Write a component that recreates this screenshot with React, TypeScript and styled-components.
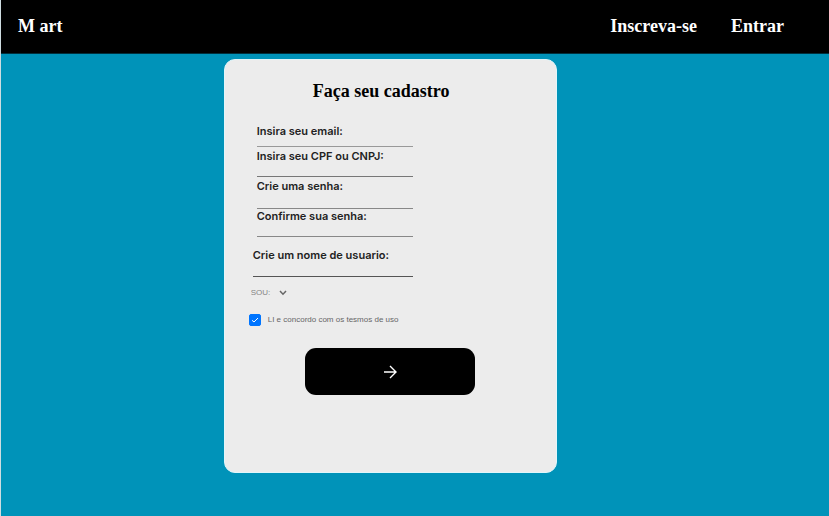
import React, { useId, useState } from "react";
import styled, { createGlobalStyle } from "styled-components";

const GlobalStyle = createGlobalStyle`
  *, *::before, *::after { box-sizing: border-box; }
  body {
    margin: 0;
    background: #0093b9;
    font-family: Inter, sans-serif;
  }
`;

const Page = styled.div`
  display: flex;
  flex-direction: column;
  min-height: 100vh;
  border-left: 1px solid #cfdde1;
`;

const TopBar = styled.header`
  display: flex;
  align-items: center;
  justify-content: space-between;
  padding: 15px 45px 15px 17px;
  background: #000;
  border-bottom: 1px solid #00303d;
`;

const TopLink = styled.a`
  color: #fff;
  font: bold 18px/23px "Liberation Serif", serif;
  text-decoration: none;
`;

const Nav = styled.nav`
  display: flex;
  gap: 34px;
`;

const Main = styled.main`
  padding: 5px 0 43px 26.9%;
`;

const Card = styled.form`
  display: flex;
  flex-direction: column;
  width: 55%;
  min-height: 414px;
  padding: 19px 24px;
  background: #ececec;
  border: 1px solid #e2f6fa;
  border-radius: 11px;
`;

const Title = styled.h1`
  margin: 0 0 21px;
  padding-right: 18px;
  color: #000;
  font: bold 18px/24px "Liberation Serif", serif;
  text-align: center;
`;

const Fields = styled.div<{ $inset: number }>`
  display: flex;
  flex-direction: column;
  width: 164px;
  padding-left: ${(p) => p.$inset}px;
`;

const FieldBox = styled.div<{ $gap: number }>`
  display: flex;
  flex-direction: column;
  margin-top: ${(p) => p.$gap}px;
`;

const Label = styled.label`
  color: #222;
  font-size: 11px;
  font-weight: 600;
  line-height: 14px;
  white-space: nowrap;
`;

const TextInput = styled.input<{ $height: number; $line: string }>`
  width: 100%;
  height: ${(p) => p.$height}px;
  padding: 0;
  border: 0;
  border-bottom: 1px solid ${(p) => p.$line};
  border-radius: 0;
  background: transparent;
  font-size: 10px;
  outline: none;
`;

const OptionRow = styled.div`
  display: flex;
  align-items: center;
  height: 16px;
  margin-top: 8px;
  padding-left: 2px;
`;

const SelectWrap = styled.span`
  display: grid;
  align-items: center;
  justify-items: end;
  width: 36px;

  & > * { grid-area: 1 / 1; }
  svg { pointer-events: none; }
`;

const Select = styled.select`
  width: 100%;
  height: 16px;
  padding: 0;
  border: 0;
  appearance: none;
  background: transparent;
  color: #858585;
  font: 8px/16px "Liberation Sans", sans-serif;
`;

const TermsRow = styled.label`
  display: flex;
  align-items: center;
  gap: 7px;
  margin-top: 13px;
  color: #666;
  font: 8px/12px "Liberation Sans", sans-serif;
`;

const CheckWrap = styled.span`
  display: grid;
  place-items: center;

  & > * { grid-area: 1 / 1; }
  svg { pointer-events: none; }
`;

const Checkbox = styled.input`
  appearance: none;
  width: 12px;
  height: 12px;
  margin: 0;
  border: 1px solid #0075ff;
  border-radius: 2px;
  background: #fff;

  &:checked { background: #0075ff; }
`;

const Submit = styled.button`
  display: flex;
  align-items: center;
  justify-content: center;
  width: 60%;
  height: 47px;
  margin: 22px auto 0;
  padding: 0;
  border: 0;
  border-radius: 11px;
  background: #000;
`;

type FieldProps = {
  label: string;
  type?: string;
  gap?: number;
  height: number;
  line: string;
};

function Field({ label, type = "text", gap = 0, height, line }: FieldProps) {
  const id = useId();
  return (
    <FieldBox $gap={gap}>
      <Label htmlFor={id}>{label}</Label>
      <TextInput id={id} type={type} $height={height} $line={line} />
    </FieldBox>
  );
}

export default function App() {
  const [accepted, setAccepted] = useState(true);

  return (
    <>
      <GlobalStyle />
      <Page>
        <TopBar>
          <TopLink href="#">M art</TopLink>
          <Nav>
            <TopLink href="#inscreva-se">Inscreva-se</TopLink>
            <TopLink href="#entrar">Entrar</TopLink>
          </Nav>
        </TopBar>
        <Main>
          <Card onSubmit={(e) => e.preventDefault()}>
            <Title>Faça seu cadastro</Title>
            <Fields $inset={8}>
              <Field label="Insira seu email:" type="email" height={9} line="#999" />
              <Field label="Insira seu CPF ou CNPJ:" gap={2} height={14} line="#777" />
              <Field label="Crie uma senha:" type="password" gap={2} height={16} line="#888" />
              <Field label="Confirme sua senha:" type="password" height={14} line="#888" />
            </Fields>
            <Fields $inset={4}>
              <Field label="Crie um nome de usuario:" gap={11} height={15} line="#555" />
            </Fields>
            <OptionRow>
              <SelectWrap>
                <Select aria-label="Sou">
                  <option>SOU:</option>
                </Select>
                <svg width="8" height="6" viewBox="0 0 8 6" fill="none" stroke="#666" strokeWidth="1.5">
                  <path d="M1 1l3 3.2L7 1" />
                </svg>
              </SelectWrap>
            </OptionRow>
            <TermsRow>
              <CheckWrap>
                <Checkbox
                  type="checkbox"
                  checked={accepted}
                  onChange={(e) => setAccepted(e.target.checked)}
                />
                {accepted && (
                  <svg width="8" height="8" viewBox="0 0 8 8" fill="none" stroke="#fff">
                    <path d="M1 4.3l2 1.7L7 2" />
                  </svg>
                )}
              </CheckWrap>
              LI e concordo com os tesmos de uso
            </TermsRow>
            <Submit type="submit" aria-label="Continuar">
              <svg width="14" height="14" viewBox="0 0 14 14" fill="none" stroke="#fff" strokeWidth="1.4">
                <path d="M1 7h12M7 1l6 6-6 6" />
              </svg>
            </Submit>
          </Card>
        </Main>
      </Page>
    </>
  );
}
